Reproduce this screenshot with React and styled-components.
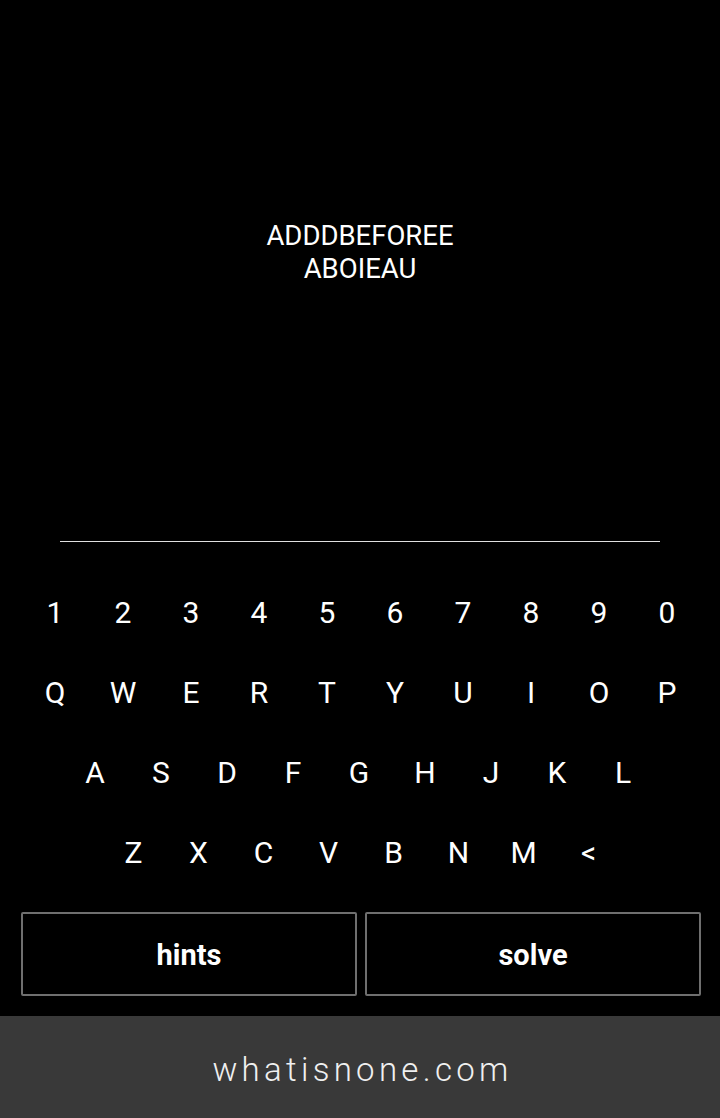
import React from "react";
import styled, { createGlobalStyle } from "styled-components";

const GlobalStyle = createGlobalStyle`
  html, body {
    margin: 0;
    padding: 0;
    background: #000;
  }
  body {
    font-family: Roboto, "Liberation Sans", sans-serif;
    color: #fff;
  }
`;

const rows = [
  { keys: "1234567890".split(""), pitch: 68, shift: 0 },
  { keys: "QWERTYUIOP".split(""), pitch: 68, shift: 0 },
  { keys: "ASDFGHJKL".split(""), pitch: 66, shift: -4 },
  { keys: "ZXCVBNM<".split(""), pitch: 65, shift: 0 },
];

function App() {
  return (
    <Page>
      <GlobalStyle />
      <Display>
        <Clue>ADDDBEFOREE</Clue>
        <Clue>ABOIEAU</Clue>
      </Display>
      <Divider />
      <Keyboard>
        {rows.map((row, i) => (
          <KeyRow key={i} $shift={row.shift}>
            {row.keys.map((k) => (
              <Key key={k} $pitch={row.pitch}>
                {k}
              </Key>
            ))}
          </KeyRow>
        ))}
      </Keyboard>
      <Actions>
        <ActionButton>hints</ActionButton>
        <ActionButton>solve</ActionButton>
      </Actions>
      <Footer>whatisnone.com</Footer>
    </Page>
  );
}

export default App;

const Page = styled.div`
  width: 720px;
  min-height: 100vh;
  display: flex;
  flex-direction: column;
  background: #000;
`;

const Display = styled.div`
  height: 541px;
  box-sizing: border-box;
  padding-top: 219px;
  display: flex;
  flex-direction: column;
  align-items: center;
`;

const Clue = styled.div`
  font-size: 27.5px;
  line-height: 33px;
  color: #fff;
`;

const Divider = styled.div`
  width: 600px;
  height: 1px;
  margin: 0 auto;
  background: #e0e0e0;
`;

const Keyboard = styled.div`
  padding: 30px 0 0 2px;
  display: flex;
  flex-direction: column;
`;

const KeyRow = styled.div`
  height: 80px;
  display: flex;
  justify-content: center;
  align-items: center;
  margin-left: ${(p) => p.$shift}px;
`;

const Key = styled.button`
  width: ${(p) => p.$pitch}px;
  height: 80px;
  padding: 0;
  border: none;
  background: transparent;
  color: #fff;
  font-family: Roboto, "Liberation Sans", sans-serif;
  font-size: 30px;
  cursor: pointer;
`;

const Actions = styled.div`
  margin-top: 20px;
  padding: 0 19px 0 21px;
  display: flex;
  gap: 8px;
`;

const ActionButton = styled.button`
  flex: 1;
  height: 84px;
  padding-top: 2px;
  background: #000;
  border: 2px solid #6f6f6f;
  border-radius: 2px;
  color: #fff;
  font-family: Roboto, "Liberation Sans", sans-serif;
  font-weight: 700;
  font-size: 29px;
  cursor: pointer;
`;

const Footer = styled.div`
  margin-top: 20px;
  height: 102px;
  box-sizing: border-box;
  padding: 4px 0 0 5px;
  background: #393939;
  display: flex;
  align-items: center;
  justify-content: center;
  font-family: Roboto, "Liberation Sans", sans-serif;
  font-weight: 300;
  font-size: 33px;
  letter-spacing: 4.3px;
  color: #f0f0f0;
`;
